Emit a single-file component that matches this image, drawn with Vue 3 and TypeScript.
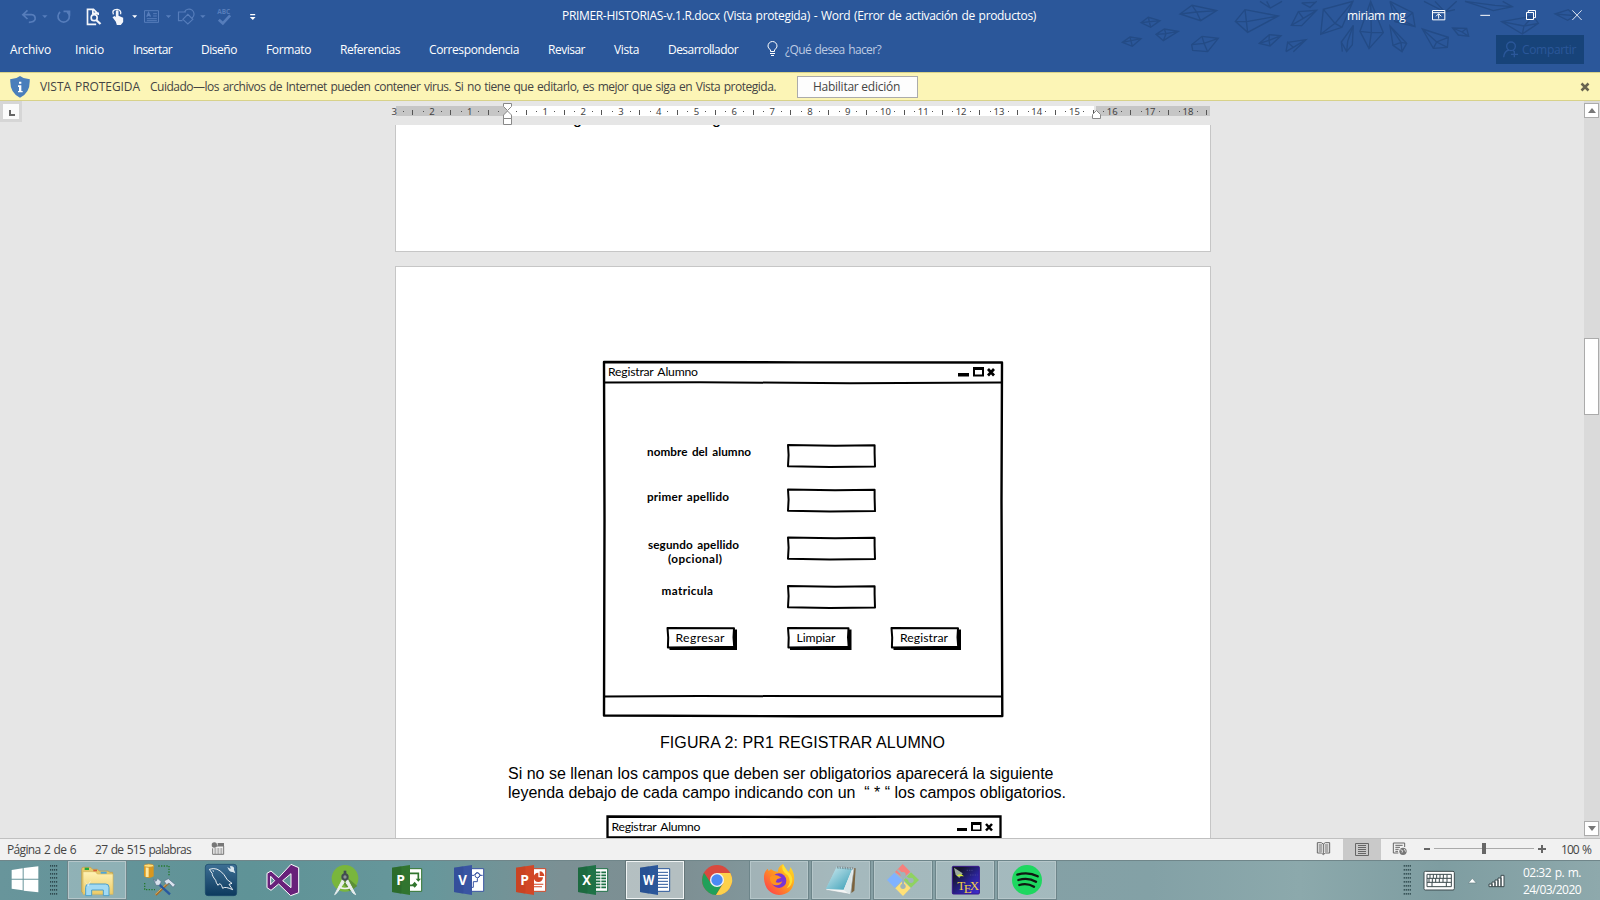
<script setup lang="ts">
import type { Directive } from 'vue'

interface Label { text: string; width: number }
interface Field { y: number; label: string; x: number; width: number; baseline: number }
interface MockButton { x: number; w: number; label: string; tx: number; tw: number }

// Tracks a label out (or in) so that it occupies the given width in pixels.
const vFit: Directive<HTMLElement, number> = {
  mounted(el, binding) {
    const natural = el.getBoundingClientRect().width
    const count = (el.textContent ?? '').length
    el.style.letterSpacing = `${(binding.value - natural) / count}px`
  },
}

const tabs: Label[] = [
  { text: 'Archivo', width: 41 },
  { text: 'Inicio', width: 29 },
  { text: 'Insertar', width: 39 },
  { text: 'Diseño', width: 36 },
  { text: 'Formato', width: 45 },
  { text: 'Referencias', width: 60 },
  { text: 'Correspondencia', width: 90 },
  { text: 'Revisar', width: 37 },
  { text: 'Vista', width: 25 },
  { text: 'Desarrollador', width: 70 },
]

const zero = 112.8
const unit = 37.8
const rulerNumbers = [-3, -2, -1, ...Array.from({ length: 18 }, (_, i) => i + 1)]
const rulerSteps = Array.from({ length: 22 }, (_, i) => i - 3)
const at = (n: number): number => Math.round(zero + unit * n)

const fields: Field[] = [
  { y: 445, label: 'nombre del alumno', x: 647, width: 104, baseline: 456.3 },
  { y: 489.5, label: 'primer apellido', x: 647, width: 82, baseline: 501 },
  { y: 537.5, label: 'segundo apellido', x: 648, width: 91, baseline: 549 },
  { y: 586, label: 'matricula', x: 661.5, width: 51.5, baseline: 595.3 },
]
const mockButtons: MockButton[] = [
  { x: 667.5, w: 67.5, label: 'Regresar', tx: 675.5, tw: 49 },
  { x: 788, w: 61.5, label: 'Limpiar', tx: 796.5, tw: 39 },
  { x: 891.5, w: 67.5, label: 'Registrar', tx: 900, tw: 48 },
]

const apps: string[] = ['explorer', 'sql', 'mysql', 'vs', 'android', 'project', 'visio', 'powerpoint', 'excel', 'word', 'chrome', 'firefox', 'notepad', 'git', 'tex', 'spotify']
const running = new Set(['explorer', 'word', 'firefox', 'notepad', 'git', 'tex', 'spotify'])
const origins = [201, 387, 573, 759, 945, -99, 87, 273, 459, 645, 831, 1017, 93, 279, 465, 651]

const office: Record<string, { x: number; light: string; dark: string; letter: string }> = {
  project: { x: -54, light: '#31752f', dark: '#27632a', letter: 'P' },
  visio: { x: 132, light: '#3955a3', dark: '#2f4a94', letter: 'V' },
  powerpoint: { x: 318, light: '#d24726', dark: '#c03f20', letter: 'P' },
  excel: { x: 504, light: '#1f7246', dark: '#196239', letter: 'X' },
  word: { x: 690, light: '#2b579a', dark: '#234c8c', letter: 'W' },
}
const grip = Array.from({ length: 32 }, (_, i) => ({ x: (i % 4) * 2, y: Math.floor(i / 4) * 4 }))
</script>

<template>
  <div class="screen">
    <header class="ribbon">
      <svg class="pattern" width="520" height="72" viewBox="0 0 1560 216" fill="none" stroke="#234b86" stroke-width="4">
        <path d="M300 42 336 16 410 32 362 62ZM300 42 350 36 410 32M336 16 350 36 362 62M183 68 205 52 240 62 212 82ZM183 68 240 62M205 52 212 82M228 103 253 87 295 94 250 122ZM228 103 258 101 295 94M253 87 258 101 250 122M127 127 150 111 183 116 157 139ZM127 127 183 116M150 111 157 139M335 134 366 109 415 115 383 155 338 151ZM335 134 372 130 415 115M366 109 372 130 383 155M466 64 495 29 595 48 503 97ZM466 64 500 65 595 48M495 29 503 97M538 130 568 104 603 107 570 138ZM538 130 567 121 603 107M568 104 567 121 570 138" />
        <path d="M540 4 571 24 606 4M560 4 571 24M665 9 690 22 710 4M665 9 705 7M634 76 655 35 710 31 665 77ZM634 76 670 55 710 31M655 35 670 55M618 155 623 127 640 142 618 155M623 127 678 119 640 155M640 142 678 119M730 28 722 103 786 82 819 4ZM730 28 765 70 819 4M722 103 765 70 786 82M840 94 872 4 910 98 867 146ZM840 94 874 98 910 98M872 4 874 98 867 146M820 76 784 126 787 155M820 76 817 134 800 155 784 126M800 155 803 124 820 76M930 4 945 65 1005 80 998 38 930 4 970 62 1005 80M945 65 970 62 998 38M930 78 939 136 966 155 980 130ZM930 78 963 127 966 155M939 136 963 127 980 130M1027 87 1060 145 1102 142 1105 112ZM1027 87 1070 126 1102 142M1060 145 1070 126 1105 112M1032 4 1095 36 1130 4M1065 4 1095 36 1125 29M1155 4 1240 32 1297 20 1268 4M1155 4 1245 16 1297 20M1118 84 1135 105 1166 109 1160 85ZM1118 84 1146 96 1166 109M1146 96 1160 85M1265 65 1327 102 1375 70 1360 48ZM1265 65 1332 78 1375 70M1327 102 1332 78 1360 48M1425 42 1465 29 1485 47 1463 61ZM1425 42 1485 47" />
      </svg>
      <div class="titlebar">
        <svg class="quick" width="267" height="30" viewBox="0 0 800 90" fill="none" stroke-width="5">
          <g stroke="#567dbb">
            <path d="M82 31 68 44 82 57M68 44H94Q106 45 105 58 102 67 86 67" /><path d="M126 46h16l-8 8z" fill="#567dbb" stroke="none" />
            <path d="M180 36A17 17 0 1 0 201 36M190 34H208V47" />
            <path d="M433 32H475V67H433ZM459 41H470M459 48H470M440 56H470M440 62H470" stroke-width="3" /><path d="M440 50 445 38 451 50M442 46H449" stroke-width="4" />
            <path d="M497 46h16l-8 8zM600 46h16l-8 8z" fill="#567dbb" stroke="none" />
            <path d="M557 36H535V62H547M548 58 563 43 578 58 563 72ZM553 36A15 15 0 1 1 576 54" stroke-width="3.5" />
            <path d="M656 59 668 70 690 46" stroke-width="8" />
          </g>
          <g stroke="#f3f5fa">
            <path d="M292 38V40L280 28H262V73H288M278 29V40H294V45" /><circle cx="282" cy="53" r="9" /><path d="M288 60 301 72" stroke-width="7" />
          </g>
          <path d="M347 65 337 52 343 48 347 51V34Q351 28 355 34V47L369 53V66L362 75H350Z" fill="#f3f5fa" /><path d="M340 43Q333 29 351 28 365 31 361 43" stroke="#f3f5fa" stroke-width="4" />
          <path d="M396 46h15l-7 8zM750 42h15v4h-15zM749 51h17l-8 9z" fill="#fff" />
          <text class="abc" x="651" y="41" fill="#567dbb" font-size="19" font-weight="bold" textLength="39" lengthAdjust="spacingAndGlyphs">ABC</text>
        </svg>
        <div class="doc-title"><span v-fit="474">PRIMER-HISTORIAS-v.1.R.docx (Vista protegida) - Word (Error de activación de productos)</span></div>
        <div class="user"><span v-fit="58.5">miriam mg</span></div>
        <svg class="controls" width="170" height="30" viewBox="1050 0 510 90" fill="none" stroke="#fff" stroke-width="3">
          <path d="M1057.500 31.500H1094.500V59.500H1057.500ZM1057 38H1095M1076 56V42M1068 49 1076 41 1084 49M1201 46H1230M1339.500 37.500H1360.500V58.500H1339.500ZM1345 37V31.500H1366.500V53H1361" /><path d="M1477 31 1505 60M1505 31 1477 60" stroke-width="2.500" />
        </svg>
      </div>
      <nav class="tabs">
        <div v-for="tab in tabs" :key="tab.text" class="tab"><span v-fit="tab.width">{{ tab.text }}</span></div>
        <svg class="bulb" width="12" height="16" viewBox="0 0 12 16" fill="none" stroke="#fff"><path d="M3.500 10.500V9C2 7.500 1 6.500 1 5a4.500 4.500 0 0 1 9 0c0 1.500-1 2.500-2.500 4v1.500ZM3 12.500H8M4 14.500H7" /></svg>
        <div class="ask"><span v-fit="96">¿Qué desea hacer?</span></div>
        <div class="share">
          <svg width="16" height="18" viewBox="1268 124 48 54" fill="none" stroke="#2b579a" stroke-width="4"><circle cx="1292" cy="140" r="13" /><path d="M1270 173Q1271 155 1286 151M1297 151 1303 157M1302 154V173M1292 164H1313" /></svg>
          <span v-fit="54">Compartir</span>
        </div>
      </nav>
    </header>

    <div class="notice">
      <svg width="20" height="22" viewBox="30 229 60 66"><path d="M60 229Q72 239 89 238 92 280 60 294 28 280 31 238 48 239 60 229Z" fill="#4a7ebb" /><path d="M57 246h7v6h-7zM54 257h10v17h4v4H54v-4h3v-12h-3z" fill="#fff" /></svg>
      <div class="notice-head"><span v-fit="100">VISTA PROTEGIDA</span></div>
      <div class="notice-text"><span v-fit="626">Cuidado—los archivos de Internet pueden contener virus. Si no tiene que editarlo, es mejor que siga en Vista protegida.</span></div>
      <button class="enable"><span v-fit="87">Habilitar edición</span></button>
      <svg class="dismiss" width="10" height="10" viewBox="0 0 10 10"><path d="M1.500 1.500 8.500 8.500M8.500 1.500 1.500 8.500" stroke="#68644f" stroke-width="2.500" /></svg>
    </div>

    <main class="workspace">
      <div class="corner"><div><svg width="14" height="14" viewBox="0 0 14 14"><path d="M7 6V11H12" fill="none" stroke="#666" stroke-width="2" /></svg></div></div>
      <div class="document">
        <svg class="ruler" width="830" height="24" viewBox="-10 0 830 24">
          <path d="M1 5H112V15H1ZM701 5H815V15H701Z" fill="#c6c6c6" /><path d="M112 5H699V15H112Z" fill="#fff" />
          <g font-size="9.500" fill="#444" text-anchor="middle">
            <text v-for="n in rulerNumbers" :key="n" :x="zero - 0.3 + unit * n" y="13.500">{{ Math.abs(n) }}</text>
          </g>
          <g fill="#555">
            <template v-for="n in rulerSteps" :key="n">
              <rect :x="at(n + 0.25) - 1" y="10" width="1" height="1" />
              <rect :x="at(n + 0.5) - 1" y="9" width="1" height="5" />
              <rect v-if="n < 18" :x="at(n + 0.75)" y="10" width="1" height="1" />
            </template>
          </g>
          <g fill="#fff" stroke="#888">
            <path d="M108.500 2.500H116.500V5.500L112.500 9.500 108.500 5.500ZM108.500 17.500V14L112.500 10 116.500 14V17.500ZM108.500 17.500H116.500V23.500H108.500Z" />
            <path d="M697.500 17.500V13.500L701.500 9.500 705.500 13.500V17.500Z" />
          </g>
        </svg>
        <section class="page first"><span>g</span><span>g</span></section>
        <section class="page second">
          <svg class="mock" width="410" height="360" viewBox="600 359 410 360">
            <g fill="none" stroke="#000" stroke-width="2" stroke-linejoin="round">
              <path d="M604 362 802 362.400 1002 362.500 1001.500 500 1002.300 716 800 716.300 604 715.500 604.500 520Z" stroke-width="2.400" />
              <path d="M604 382.500 700 382.200 850 383.200 1002 382.500M604 696.500 700 696 1002 696.600" />
              <path v-for="f in fields" :key="f.y" :d="`M788 ${f.y}L835 ${f.y + 0.800} 874.600 ${f.y + 0.300}V${f.y + 8}L875 ${f.y + 21.600} 830 ${f.y + 22} 788 ${f.y + 21.200} 788.600 ${f.y + 10}Z`" />
            </g>
            <text x="608" y="376" textLength="90">Registrar Alumno</text>
            <path d="M958 373H969V376.500H958ZM973 367H984V376.500H973ZM975 370V374.500H982V370Z" fill-rule="evenodd" /><path d="M988 369 994 375.500M994 369 988 375.500" stroke="#000" stroke-width="2.700" />
            <g class="strong">
              <text v-for="f in fields" :key="f.label" :x="f.x" :y="f.baseline" :textLength="f.width">{{ f.label }}</text>
              <text x="668" y="563" textLength="54">(opcional)</text>
            </g>
            <g v-for="b in mockButtons" :key="b.label">
              <path :d="`M${b.x + 2} 629.500h${b.w}v20.500h${-b.w}z`" />
              <path :d="`M${b.x} 628l${b.w - 1} .3 -.5 9 .7 9.500 ${-b.w + 1.2} .7 .3-10z`" fill="#fff" stroke="#000" stroke-width="2" stroke-linejoin="round" />
              <text :x="b.tx" y="641.700" :textLength="b.tw">{{ b.label }}</text>
            </g>
          </svg>
          <div class="caption"><span v-fit="285">FIGURA 2: PR1 REGISTRAR ALUMNO</span></div>
          <div class="para"><span v-fit="545.500">Si no se llenan los campos que deben ser obligatorios aparecerá la siguiente</span></div>
          <div class="para"><span v-fit="558">leyenda debajo de cada campo indicando con un&nbsp; “ * “ los campos obligatorios.</span></div>
          <svg class="mock next" width="410" height="24" viewBox="600 814 410 24">
            <path d="M607.500 840V816.500L800 817 1000.500 816.300V840M607 837.300 1001 837" fill="none" stroke="#000" stroke-width="2.300" />
            <text x="611.500" y="830.500" textLength="89">Registrar Alumno</text>
            <path d="M957 828H967V831H957ZM971 822H981.500V831H971ZM973 825V829.500H980V825Z" fill-rule="evenodd" /><path d="M986 824 992 830.500M992 824 986 830.500" stroke="#000" stroke-width="2.500" />
          </svg>
        </section>
      </div>
      <div class="scrollbar">
        <div class="arrow"><svg width="8" height="5" viewBox="0 0 8 5"><path d="M0 5 4 0 8 5Z" fill="#777" /></svg></div>
        <div class="thumb"></div>
        <div class="arrow down"><svg width="8" height="5" viewBox="0 0 8 5"><path d="M0 0 4 5 8 0Z" fill="#777" /></svg></div>
      </div>
    </main>

    <div class="status">
      <div class="page-no"><span v-fit="69">Página 2 de 6</span></div>
      <div class="words"><span v-fit="96">27 de 515 palabras</span></div>
      <svg class="macro" width="14" height="14" viewBox="632 21 42 42"><path d="M643 33H670V58H637V40" fill="none" stroke="#777" stroke-width="3" /><circle cx="642" cy="30" r="8" fill="#777" /><path d="M652 24H671V33H652Z" fill="#777" /><path d="M642 42H666M642 48H666M642 54H666" stroke="#777" stroke-width="3" stroke-dasharray="6 3" /></svg>
      <div class="views">
        <svg width="40" height="21" viewBox="69 41 120 63" fill="none" stroke="#666" stroke-width="3"><path d="M112 52H124L130 56 136 52H149V83H136L130 88 124 83H112ZM130 56V86M116 59H126M116 65H126M116 71H126M116 77H126M134 59H145M134 65H145M134 71H145M134 77H145" /></svg>
        <div class="active"><svg width="14" height="14" viewBox="0 0 14 14" fill="none" stroke="#666"><path d="M.5.500H13.500V12.500H.5ZM3 2.500H11M3 4.500H11M3 6.500H11M3 8.500H11M3 10.500H11" /></svg></div>
        <svg width="38" height="21" viewBox="303 41 114 63" fill="none" stroke="#666" stroke-width="3"><path d="M355 83H340V53H374V65M346 60H368M346 66H360M346 72H356M346 78H354" /><circle cx="369" cy="78" r="11" fill="#777" stroke="none" /><path d="M361 73 368 76 366 82M373 71 377 79" stroke="#ddd" /></svg>
        <svg class="slider" width="128" height="21" viewBox="0 0 128 21"><path d="M3 9H9V11H3ZM117 9H125V11H117ZM120 6H122V14H120Z" fill="#666" /><path d="M13 9.500H113" stroke="#aaa" /><path d="M61 4H65V15H61Z" fill="#666" /></svg>
        <div class="zoom"><span v-fit="30">100 %</span></div>
      </div>
    </div>

    <footer class="taskbar">
      <div class="start">
        <svg width="28" height="28" viewBox="34 93 84 84"><path d="M36 105 69 100V131H36ZM72 99 116 94V131H72ZM36 134H69V166L36 161ZM72 134H116V172L72 167Z" fill="#fff" /></svg>
      </div>
      <svg class="grip" width="8" height="31" viewBox="0 0 8 31"><rect v-for="(g, i) in grip" :key="i" :x="g.x" :y="g.y" width="1.200" height="1.700" fill="#304b50" /></svg>
      <div class="apps">
        <div v-for="(app, i) in apps" :key="app" class="app" :class="[{ running: running.has(app) }, app]">
          <svg width="60" height="40" :viewBox="`${origins[i]} 75 180 120`">
            <defs>
              <linearGradient id="fire" x1="1" y1="0" x2="0" y2="1"><stop offset="0" stop-color="#ffe92b" /><stop offset=".45" stop-color="#ff9a1d" /><stop offset="1" stop-color="#ff2f55" /></linearGradient>
              <linearGradient id="note" x1="0" y1="0" x2="1" y2="1"><stop offset="0" stop-color="#d5eef3" /><stop offset="1" stop-color="#379db5" /></linearGradient>
              <linearGradient id="sea" x1="0" y1="0" x2="0" y2="1"><stop offset="0" stop-color="#3d6f94" /><stop offset="1" stop-color="#0d3a5e" /></linearGradient>
              <linearGradient id="night" x1="0" y1="0" x2="1" y2="1"><stop offset=".2" stop-color="#15152c" /><stop offset=".6" stop-color="#2a2399" /><stop offset="1" stop-color="#4030d0" /></linearGradient>
              <linearGradient id="folder" x1="0" y1="0" x2="0" y2="1"><stop offset="0" stop-color="#fff2b5" /><stop offset="1" stop-color="#eccb67" /></linearGradient>
            </defs>
            <g v-if="app === 'explorer'">
              <path d="M245 102Q245 97 250 97H272L278 103H292L298 108H324L330 112H338V176H252L245 171Z" fill="#e5c869" stroke="#bd9a45" stroke-width="2" />
              <path d="M249 110H286L292 117H339V178H249Z" fill="url(#folder)" stroke="#d6b85d" stroke-width="2" />
              <path d="M254 98H267V105H254Z" fill="#24a83a" /><path d="M280 104H291V109H280Z" fill="#d65b39" /><path d="M302 110H320V116H302Z" fill="#4da5d9" />
              <path d="M257 182V157Q257 147 267 147H317Q327 147 327 157V182H310V165H275V182Z" fill="#a2daf3" stroke="#4d9ec8" stroke-width="3" />
              <path d="M252 136 263 148 274 136 265 154Z" fill="#fff" opacity=".6" />
            </g>
            <g v-else-if="app === 'sql'">
              <path d="M432 92V124Q446 134 461 124V92Z" fill="#d9971e" /><path d="M437 95V126H446V95Z" fill="#ffe9a0" /><ellipse cx="446.500" cy="92" rx="14.500" ry="5" fill="#ffe17a" stroke="#bd8125" stroke-width="2" />
              <path d="M475 93H507V125M434 144V164H465" fill="none" stroke="#24792d" stroke-width="4" stroke-dasharray="4 4" />
              <path d="M467 180 510 139" stroke="#a76c25" stroke-width="7" /><path d="M466 178 507 140" stroke="#ead392" stroke-width="2" /><path d="M468 140 510 178" stroke="#2758a0" stroke-width="7" />
              <path d="M460 132 468 139 473 130 484 140 478 151 468 151ZM492 138 505 131 526 149 519 157 507 144 500 149Z" fill="#d8e2ed" stroke="#597089" stroke-width="2" />
            </g>
            <g v-else-if="app === 'mysql'">
              <rect x="616" y="88" width="94" height="94" rx="8" fill="url(#sea)" stroke="#174668" stroke-width="2" />
              <path d="M628 103Q652 94 672 119 680 137 696 145L687 148 698 164Q675 153 668 160 661 138 654 151 648 143 647 136 635 121 637 116ZM638 107 642 109" fill="none" stroke="#fff" stroke-width="2.700" /><path d="M682 96 692 102 690 93Q705 94 702 104L706 115 698 111Q687 112 682 96Z" fill="#d8e5ed" />
            </g>
            <path v-else-if="app === 'vs'" d="M801 115 813 108 836 128 873 88 896 98V173L872 182 836 147 813 166 801 158ZM812 124V149L824 137ZM848 137 873 158V116Z" fill="#68217a" stroke="#fff" stroke-width="3" fill-rule="evenodd" />
            <g v-else-if="app === 'android'">
              <circle cx="1035" cy="130" r="40" fill="#79b63c" /><path d="M1040 126 1072 153 1049 169 1031 147Z" fill="#5c8f36" />
              <path d="M1028 132 1004 179 1011 173 1032 143ZM1042 132 1067 179 1059 174 1038 143Z" fill="#e8eeee" stroke="#e8eeee" stroke-width="3" /><path d="M1016 155Q1035 166 1054 155" fill="none" stroke="#eef1ee" stroke-width="5" />
              <circle cx="1035" cy="126" r="8" fill="#8b9494" stroke="#424c50" stroke-width="6" /><path d="M1031 107H1039V117H1031Z" fill="#424c50" />
            </g>
            <g v-else-if="office[app]" :transform="`translate(${office[app].x - 690} 0)`">
              <path d="M736 101H779V169H736Z" fill="#fff" :stroke="office[app].light" stroke-width="3" />
              <path v-if="app === 'word'" d="M744 112H774M744 121H774M744 130H774M744 139H774M744 148H774M744 157H774" stroke="#2b579a" stroke-width="3" />
              <path v-else-if="app === 'excel'" d="M743 112H774M743 121H774M743 130H774M743 139H774M743 148H774M743 157H774" stroke="#1f7246" stroke-width="5" stroke-dasharray="14 3" />
              <g v-else-if="app === 'powerpoint'" fill="#d24726"><path d="M757 113A14 14 0 1 0 771 127H757Z" /><path d="M761 109A14 14 0 0 1 775 123H761ZM744 146H772V149H744ZM744 154H768V157H744Z" /></g>
              <g v-else-if="app === 'visio'" fill="none" stroke="#3955a3" stroke-width="3"><circle cx="760" cy="121" r="7" /><path d="M743 121H750L760 111 770 121 760 131V140H748V157H743M768 121H776" /></g>
              <g v-else><path d="M744 115H769V134M744 151H762" fill="none" stroke="#31752f" stroke-width="5" /><path d="M761 131H777L769 140ZM758 140 766 149 758 158 750 149Z" fill="#31752f" /></g>
              <path d="M690 98 744 90V180L690 171Z" :fill="office[app].light" /><path d="M690 98 718 94V176L690 171Z" :fill="office[app].dark" opacity=".5" />
              <text x="716" y="151" text-anchor="middle" font-size="44" font-weight="bold" fill="#fff" :textLength="app === 'word' ? 34 : 26" lengthAdjust="spacingAndGlyphs">{{ office[app].letter }}</text>
            </g>
            <g v-else-if="app === 'chrome'">
              <circle cx="921" cy="135" r="45" fill="#d9493e" /><path d="M882 113A45 45 0 0 0 918 180L938 146 904 146Z" fill="#21a05a" /><path d="M921 114H961A45 45 0 0 1 918 180L940 145Z" fill="#fdd14b" />
              <circle cx="921" cy="135" r="21" fill="#f2f5f7" /><circle cx="921" cy="135" r="17" fill="#4a8af4" />
            </g>
            <g v-else-if="app === 'firefox'">
              <path d="M1062 132Q1060 111 1073 101L1076 108 1083 103Q1091 110 1103 111L1106 99Q1111 90 1119 87 1124 103 1136 110 1142 100 1141 96 1156 115 1152 143 1144 178 1107 180 1066 176 1062 132Z" fill="url(#fire)" />
              <circle cx="1107" cy="137" r="22" fill="#7b35d3" /><path d="M1080 127Q1087 117 1105 122L1114 128 1101 133 1097 142Q1108 146 1117 139 1110 156 1090 149 1079 142 1080 127Z" fill="#ff941d" /><path d="M1119 88Q1110 106 1133 121 1147 140 1130 160 1148 152 1147 131 1143 116 1134 111Z" fill="#ffe031" />
            </g>
            <g v-else-if="app === 'notepad'">
              <path d="M216 98 227 100 223 167 214 174Z" fill="#7c633e" /><path d="M171 94 222 100 211 178 137 165Z" fill="#f4f5f5" stroke="#9eafb3" stroke-width="2" /><path d="M170 95 217 101 191 164 137 162Z" fill="url(#note)" /><path d="M191 165 218 101 209 178Z" fill="#dce7e9" />
              <path d="M171 97 219 101" stroke="#69777b" stroke-width="7" stroke-dasharray="2 3" />
            </g>
            <g v-else-if="app === 'git'">
              <path d="M368 87 391 110 370 130 345 111Z" fill="#f7807c" /><path d="M343 113 367 135 344 158 321 135Z" fill="#80b2ff" /><path d="M393 112 417 135 393 158 371 135Z" fill="#8fd261" /><path d="M369 137 392 159 369 183 346 160Z" fill="#ffe177" />
              <path d="M352 104 369 120V151M372 123 392 136" fill="none" stroke="#a0b4b9" stroke-width="6" /><circle cx="369" cy="119" r="8" fill="#a0b4b9" /><circle cx="393" cy="136" r="8" fill="#a0b4b9" /><circle cx="369" cy="154" r="8" fill="#a0b4b9" />
            </g>
            <g v-else-if="app === 'tex'">
              <rect x="517" y="94" width="81" height="83" rx="3" fill="url(#night)" stroke="#39168c" stroke-width="3" /><path d="M522 98 548 115 538 129 527 119Z" fill="#9ba89d" /><path d="M530 123Q540 112 552 124Z" fill="#d9f22d" /><path d="M560 106H580M570 120H593" stroke="#55559d" stroke-width="2" stroke-dasharray="4 3" />
              <g class="tex-name"><text x="532" y="164">T</text><text x="551" y="174">E</text><text x="569" y="164">X</text></g>
            </g>
            <g v-else>
              <circle cx="741" cy="135" r="45" fill="#1ed760" /><path d="M712 119Q745 109 773 124M715 135Q744 126 768 140M718 150Q741 143 762 155" fill="none" stroke="#101712" stroke-width="7" stroke-linecap="round" />
            </g>
          </svg>
        </div>
      </div>
      <svg class="tray" width="110" height="40" viewBox="370 105 330 120">
        <g transform="translate(372 120) scale(3)"><rect v-for="(g, i) in grip" :key="i" :x="g.x" :y="g.y" width="1.200" height="1.700" fill="#304b50" /></g>
        <rect x="433" y="139" width="91" height="56" rx="4" fill="#fff" stroke="#3d4b4e" stroke-width="3" /><path d="M442 148H515V185H442ZM442 160H515M442 172H515M451 148V160M461 148V160M471 148V160M481 148V160M491 148V160M502 148V160M448 160V172M458 160V172M468 160V172M479 160V172M490 160V172M502 160V172M457 172V185M500 172V185" fill="none" stroke="#3d4b4e" stroke-width="3" />
        <path d="M566 174 578 160 590 174Z" fill="#fff" stroke="#657f83" stroke-width="2" />
        <path d="M628 177H637V185H628ZM637 171H646V185H637ZM646 165H655V185H646ZM655 159H664V185H655ZM664 151H673V185H664Z" fill="#fff" stroke="#3d4b4e" stroke-width="3" />
      </svg>
      <div class="clock"><span v-fit="58">02:32 p. m.</span><span v-fit="58">24/03/2020</span></div>
    </footer>
  </div>
</template>

<style>
body { margin: 0; overflow: hidden; }
</style>

<style scoped>
.screen { width: 1600px; height: 900px; display: flex; flex-direction: column; overflow: hidden; background: #e6e6e6; font-family: "Open Sans", "Noto Sans", sans-serif; font-size: 12px; word-spacing: 1px; color: #444; white-space: nowrap; }
.screen svg { display: block; flex: none; }
span { display: inline-block; }
.ribbon { position: relative; height: 72px; flex: none; background: #2b579a; color: #fff; }
.pattern { position: absolute; right: 0; top: 0; }
.titlebar { position: relative; display: flex; height: 31px; line-height: 32px; }
.doc-title { margin-left: 295px; width: 785px; }
.user { width: 83px; }
.tabs { position: relative; display: flex; align-items: center; height: 37px; padding-left: 10px; }
.tab { margin: -1px 29px 0 0; }
.tab:first-child { margin-right: 24px; }
.bulb { margin-top: -2px; }
.ask { margin: -1px 0 0 6px; color: #bdcae2; width: 711px; }
.share { display: flex; align-items: center; box-sizing: border-box; width: 88px; height: 29px; padding-left: 7px; gap: 3px; background: #174379; color: #2b579a; }
.notice { box-sizing: border-box; height: 29px; flex: none; display: flex; align-items: center; padding-left: 10px; border: solid #d8d28a; border-width: 1px 0; background: #fcf5b6; }
.notice-head { margin-left: 10px; width: 110px; }
.notice-text { width: 647px; }
.enable { box-sizing: border-box; width: 121px; height: 22px; padding: 0 2px 0 0; border: 1px solid #ababab; background: #fdfdfd; font: inherit; color: #444; }
.dismiss { margin-left: 662px; }
.workspace { display: flex; height: 737px; flex: none; }
.corner { box-sizing: border-box; width: 22px; height: 21px; padding: 3px; background: #d6d6d6; }
.corner div { width: 16px; height: 15px; background: #fbfbfb; }
.document { width: 1562px; height: 737px; overflow: hidden; display: flex; flex-direction: column; }
.ruler { margin-left: 363px; font-family: "Noto Sans", sans-serif; }
.page { box-sizing: border-box; margin-left: 373px; width: 816px; border: 1px solid #c6c6c6; background: #fff; color: #000; font-family: "Liberation Sans", sans-serif; font-size: 16px; word-spacing: 0; flex: none; }
.first { height: 127px; border-top: 0; overflow: hidden; padding-left: 177px; display: flex; gap: 130px; line-height: 18px; }
.first span { margin-top: -15px; }
.second { height: 700px; margin-top: 14px; padding: 92px 0 0 112px; }
.mock { margin-left: 92px; font-family: Lato, sans-serif; font-size: 12.200px; word-spacing: 1.5px; }
.strong { font-weight: 700; font-size: 11.700px; }
.caption { margin: 14px 0 12px 152px; height: 19px; line-height: 19px; }
.para { height: 19px; line-height: 19px; }
.next { margin-top: 12px; }
.scrollbar { width: 16px; display: flex; flex-direction: column; background: #dadada; }
.arrow { box-sizing: border-box; width: 15px; height: 15px; margin-top: 2px; border: 1px solid #ababab; background: #fff; display: flex; align-items: center; justify-content: center; flex: none; }
.thumb { box-sizing: border-box; width: 15px; height: 77px; margin-top: 220px; border: 1px solid #ababab; background: #fff; }
.down { margin-top: 406px; }
.status { box-sizing: border-box; height: 22px; flex: none; display: flex; align-items: center; border-top: 1px solid #c0c0c0; background: #f1f1f1; padding-left: 7px; }
.page-no { width: 88px; }
.words { width: 116px; }
.macro { margin-top: -2px; }
.views { display: flex; align-items: center; margin-left: 1078px; height: 21px; }
.active { width: 38px; height: 21px; background: #c9c9c9; display: flex; align-items: center; justify-content: center; }
.slider { margin-left: 2px; }
.zoom { margin-left: 12px; }
.taskbar { box-sizing: border-box; height: 40px; flex: none; display: flex; border-top: 1px solid #70868a; background: linear-gradient(90deg, #68959b 0, #5f9397 250px, #67979b 430px, #7b9094 560px, #7d8f93 680px, #87a0a5 850px, #83a1a6 1150px, #8ca9ac 1300px, #7e9da1 1440px, #8ea9ac 1600px); }
.start { width: 50px; padding: 5px 0 0 11px; box-sizing: border-box; }
.grip { margin-top: 4px; }
.apps { display: flex; margin-left: 9px; gap: 2px; margin-top: -1px; }
.app { box-sizing: border-box; width: 60px; height: 40px; }
.running { background: rgba(220, 231, 233, .36); box-shadow: inset 0 0 0 1px #6d858a, inset 0 0 0 2px #b5c6c9; }
.word { background: rgba(235, 239, 240, .5); box-shadow: inset 0 0 0 1px #65777a, inset 0 0 0 2px #f0f4f4; }
.tex-name { font-family: "Liberation Serif", serif; font-size: 39px; fill: #f0ce48; }
.tray { margin-left: 346px; margin-top: -1px; }
.clock { margin-left: 10px; margin-top: 3px; color: #fff; line-height: 17px; display: flex; flex-direction: column; align-items: flex-start; }
</style>
